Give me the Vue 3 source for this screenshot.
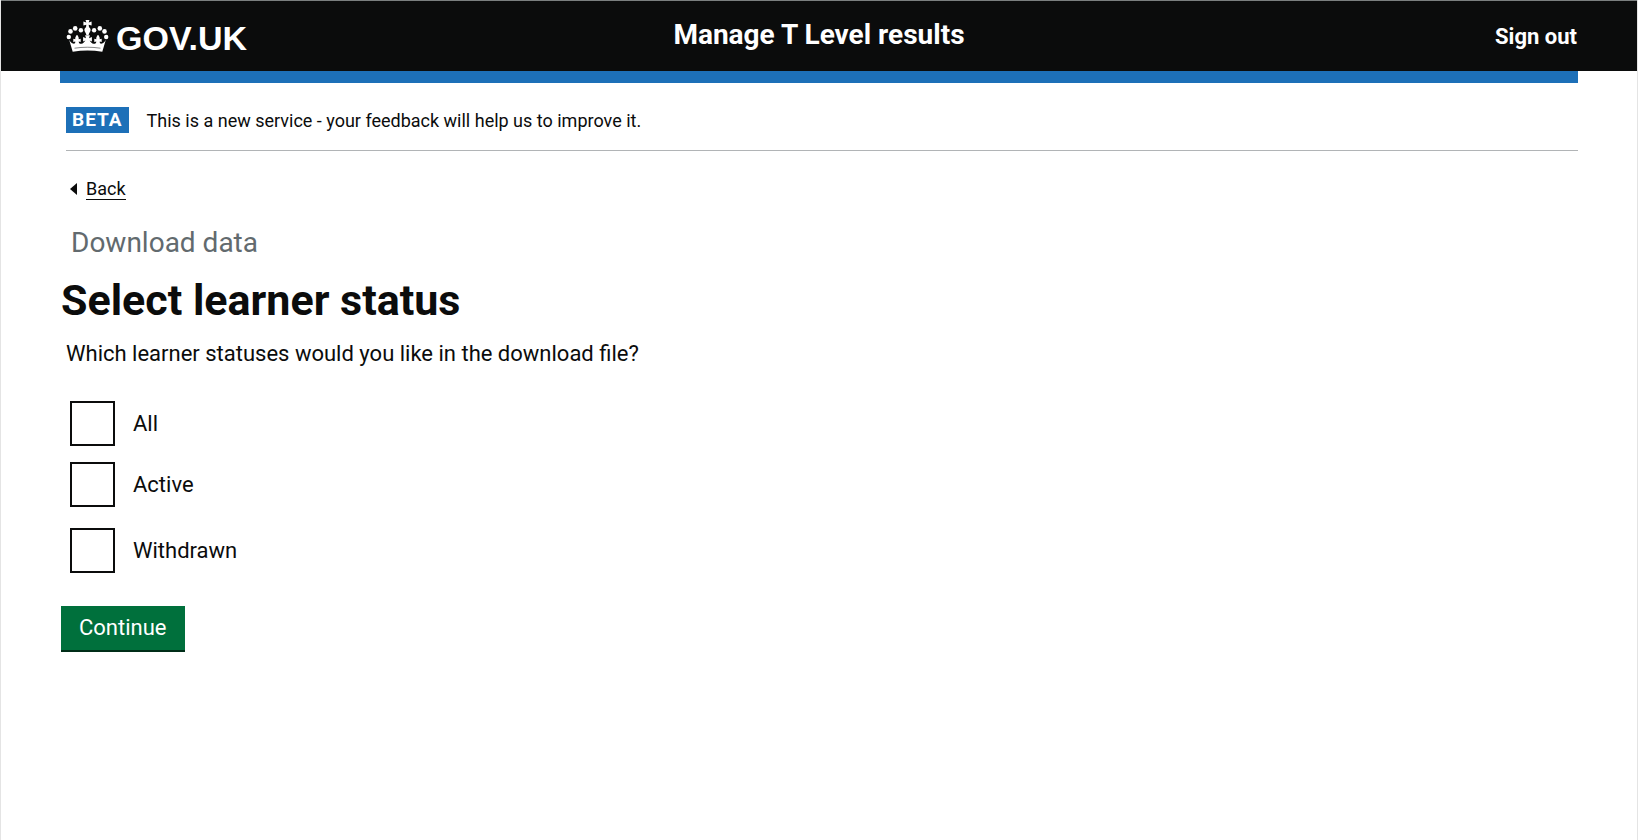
<script setup>
import { ref } from 'vue'

const statuses = [
  { id: 'all', label: 'All' },
  { id: 'active', label: 'Active' },
  { id: 'withdrawn', label: 'Withdrawn' },
]
const selected = ref([])
</script>

<template>
  <div class="page">
    <header class="header">
      <a class="logo" href="#" aria-label="GOV.UK">
        <svg class="crown" viewBox="0 0 42 32" aria-hidden="true">
          <g fill="#fff">
            <circle cx="2.300" cy="17" r="2.200" />
            <circle cx="4" cy="11.400" r="2.300" />
            <circle cx="8.700" cy="8.400" r="2.300" />
            <circle cx="14.400" cy="10.200" r="2.200" />
            <circle cx="27.600" cy="10.200" r="2.200" />
            <circle cx="33.300" cy="8.400" r="2.300" />
            <circle cx="38" cy="11.400" r="2.300" />
            <circle cx="39.700" cy="17" r="2.200" />
            <path d="M19 0h4l-.8 2.500 2.900-.9v4l-2.900-.9.3 2.500c1 .7 1.700 1.600 1.600 2.800-.1 1.700-1.500 2.900-2 5h-2.200c-.5-2.100-1.900-3.300-2-5-.1-1.200.6-2.100 1.600-2.800l.3-2.500-2.900.9v-4l2.900.9z" />
            <path d="M6.200 31.800 2.600 19.600c1.300 2.600 3.200 4.400 5 4 1-.3 1.300-1.100 1.100-2.200l-1.900.6v-3.200l2 .5c-.3-1.600.4-3 1.700-4.500 1.300 1.500 2 2.900 1.700 4.500l2-.5v3.200l-2-.6c0 1.800 1.200 2.700 2.700 2.400 1.700-.4 2.600-1.400 4-3.300l-2.300.9v-4.400l2.900 1.200-.9-2.900h4.800l-.9 2.900 2.900-1.200v4.400l-2.300-.9c1.400 1.900 2.300 2.900 4 3.300 1.500.3 2.700-.6 2.700-2.400l-2 .6v-3.200l2 .5c-.3-1.600.4-3 1.700-4.500 1.300 1.500 2 2.900 1.700 4.500l2-.5V22l-1.900-.6c-.2 1.100.1 1.900 1.100 2.200 1.800.4 3.700-1.400 5-4l-3.600 12.200c-9.900-1.800-19.700-1.800-29.600 0z" />
          </g>
          <path d="M8 28.200c8.700-1.300 17.300-1.300 26 0" fill="none" stroke="#0b0c0c" stroke-width=".5" />
        </svg>
        <span class="wordmark">GOV.UK</span>
      </a>
      <a class="service" href="#">Manage T Level results</a>
      <a class="signout" href="#">Sign out</a>
    </header>

    <div class="container">
      <div class="bar"></div>
      <div class="phase">
        <strong class="tag">BETA</strong>
        <span class="phase-text">This is a new service - your feedback will help us to improve it.</span>
      </div>

      <a class="back" href="#">
        <svg class="arrow" viewBox="0 0 7 12" aria-hidden="true"><path d="M0 6 7 0v12z" fill="#0b0c0c" /></svg>
        <span class="back-text">Back</span>
      </a>

      <main>
        <p class="caption">Download data</p>
        <h1>Select learner status</h1>
        <form @submit.prevent>
          <fieldset>
            <legend>Which learner statuses would you like in the download file?</legend>
            <div v-for="s in statuses" :key="s.id" class="item">
              <input :id="s.id" v-model="selected" type="checkbox" :value="s.id" />
              <label :for="s.id">{{ s.label }}</label>
            </div>
          </fieldset>
          <button type="submit">Continue</button>
        </form>
      </main>
    </div>
  </div>
</template>

<style>
body {
  margin: 0;
  background: #fff;
}
</style>

<style scoped>
.page {
  box-sizing: border-box;
  min-height: 100vh;
  border: solid #e4e4e4;
  border-width: 0 1px;
  font-family: Roboto, "Liberation Sans", sans-serif;
  color: #0b0c0c;
}
.header {
  box-sizing: border-box;
  height: 71px;
  border-top: 1px solid #7b7f7f;
  padding: 0 60px;
  display: grid;
  grid-template-columns: 1fr auto 1fr;
  background: #0b0c0c;
}
.header a {
  color: #fff;
  text-decoration: none;
  font-weight: 700;
}
.logo {
  display: flex;
  align-items: flex-start;
  gap: 7px;
  padding: 19px 0 0 5px;
}
.crown {
  width: 43px;
  height: 32px;
}
.wordmark {
  font-family: "Liberation Sans", Arial, sans-serif;
  font-size: 34px;
  line-height: 37px;
}
.service {
  padding-top: 16px;
  font-size: 28px;
  line-height: 36px;
}
.signout {
  justify-self: end;
  padding-top: 20px;
  font-size: 22px;
  line-height: 32px;
}
.container {
  margin: 0 59px;
}
.bar {
  height: 12px;
  background: #1d70b8;
}
.phase {
  display: flex;
  align-items: center;
  gap: 18px;
  margin-left: 6px;
  padding: 24px 0 17px;
  border-bottom: 1px solid #b1b4b6;
}
.tag {
  padding: 0 6px;
  background: #1d70b8;
  color: #fff;
  font-size: 19px;
  line-height: 26px;
  letter-spacing: 1px;
}
.phase-text {
  padding-top: 2px;
  font-size: 18px;
  line-height: 24px;
}
.back {
  display: flex;
  width: max-content;
  align-items: center;
  gap: 9px;
  margin: 27px 0 0 10px;
  color: #0b0c0c;
  font-size: 18px;
  line-height: 21px;
  text-decoration: none;
}
.back-text {
  border-bottom: 1px solid #0b0c0c;
}
.arrow {
  width: 7px;
  height: 12px;
}
.caption {
  margin: 25px 0 0 11px;
  color: #626a6e;
  font-size: 28px;
  line-height: 36px;
}
h1 {
  margin: 11px 0 10px 1px;
  font-size: 43px;
  line-height: 56px;
}
fieldset {
  min-width: 0;
  margin: 0 0 33px;
  padding: 0;
  border: 0;
}
legend {
  padding: 0 0 0 6px;
  margin-bottom: 31px;
  font-size: 22px;
  line-height: 32px;
}
.item {
  display: flex;
  align-items: center;
  gap: 18px;
  margin: 0 0 16px 10px;
  font-size: 22px;
  line-height: 32px;
}
.item:last-child {
  margin-top: 21px;
  margin-bottom: 0;
}
input {
  appearance: none;
  box-sizing: border-box;
  width: 45px;
  height: 45px;
  margin: 0;
  border: 2px solid #0b0c0c;
  background: #fff;
}
input:checked {
  box-shadow: inset 0 0 0 8px #fff;
  background: #0b0c0c;
}
button {
  margin: 0 0 0 1px;
  padding: 6px 18px;
  border: 0;
  border-bottom: 2px solid #002d18;
  background: #00703c;
  color: #fff;
  font-family: inherit;
  font-size: 22px;
  line-height: 32px;
}
</style>
